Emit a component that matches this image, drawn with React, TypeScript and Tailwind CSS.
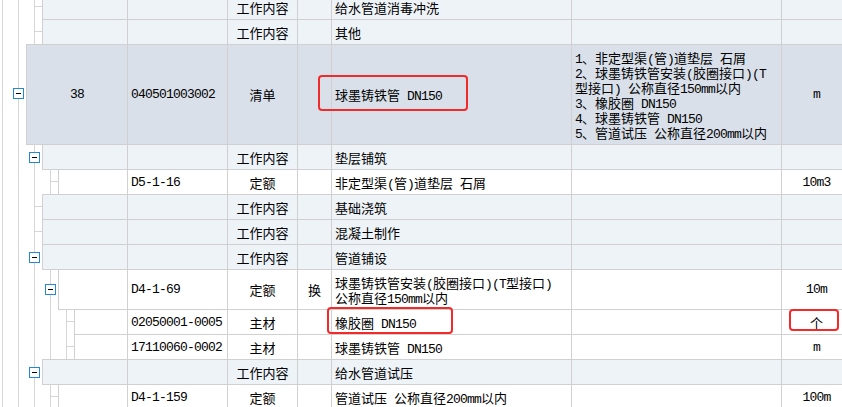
import clsx from 'clsx'

// one row of the 分部分项 tree grid
type Row = {
  start: number // x of the row's left border
  height: number
  h: string
  bg: string
  lines: number[] // tree line x positions
  box?: { x: number; y: number }
  stub?: number
  seq?: string
  code?: string
  cat: string
  mark?: string
  name: string[]
  feat?: string[]
  unit?: string
}

const WORK = 'bg-[#eef3f8]'
const LIST = 'bg-[#d9e0ea]'
const WHITE = 'bg-white'

const rows: Row[] = [
  { start: 42, height: 26, h: 'h-[26px]', bg: WORK, lines: [2, 18, 34], stub: 34, cat: '工作内容', name: ['给水管道消毒冲洗'] },
  { start: 42, height: 26, h: 'h-[26px]', bg: WORK, lines: [2, 18, 34], stub: 34, cat: '工作内容', name: ['其他'] },
  {
    start: 26, height: 101, h: 'h-[101px]', bg: LIST, lines: [2, 18], box: { x: 18, y: 44 },
    seq: '38', code: '040501003002', cat: '清单', name: ['球墨铸铁管 DN150'],
    feat: [
      '1、非定型渠(管)道垫层 石屑',
      '2、球墨铸铁管安装(胶圈接口)(T',
      '型接口) 公称直径150mm以内',
      '3、橡胶圈 DN150',
      '4、球墨铸铁管 DN150',
      '5、管道试压 公称直径200mm以内',
    ],
    unit: 'm',
  },
  { start: 42, height: 26, h: 'h-[26px]', bg: WORK, lines: [2, 18, 34], box: { x: 34, y: 8 }, cat: '工作内容', name: ['垫层铺筑'] },
  { start: 58, height: 26, h: 'h-[26px]', bg: WHITE, lines: [2, 18, 34, 50], stub: 50, code: 'D5-1-16', cat: '定额', name: ['非定型渠(管)道垫层 石屑'], unit: '10m3' },
  { start: 42, height: 26, h: 'h-[26px]', bg: WORK, lines: [2, 18, 34], stub: 34, cat: '工作内容', name: ['基础浇筑'] },
  { start: 42, height: 26, h: 'h-[26px]', bg: WORK, lines: [2, 18, 34], stub: 34, cat: '工作内容', name: ['混凝土制作'] },
  { start: 42, height: 26, h: 'h-[26px]', bg: WORK, lines: [2, 18, 34], box: { x: 34, y: 8 }, cat: '工作内容', name: ['管道铺设'] },
  {
    start: 58, height: 41, h: 'h-[41px]', bg: WHITE, lines: [2, 18, 34, 50], box: { x: 50, y: 15 },
    code: 'D4-1-69', cat: '定额', mark: '换', name: ['球墨铸铁管安装(胶圈接口)(T型接口)', '公称直径150mm以内'], unit: '10m',
  },
  { start: 74, height: 26, h: 'h-[26px]', bg: WHITE, lines: [2, 18, 34, 50, 66], stub: 66, code: '02050001-0005', cat: '主材', name: ['橡胶圈 DN150'], unit: '个' },
  { start: 74, height: 26, h: 'h-[26px]', bg: WHITE, lines: [2, 18, 34, 50, 66], stub: 66, code: '17110060-0002', cat: '主材', name: ['球墨铸铁管 DN150'], unit: 'm' },
  { start: 42, height: 26, h: 'h-[26px]', bg: WORK, lines: [2, 18, 34], box: { x: 34, y: 8 }, cat: '工作内容', name: ['给水管道试压'] },
  { start: 58, height: 26, h: 'h-[26px]', bg: WHITE, lines: [2, 18, 34, 50], stub: 50, code: 'D4-1-159', cat: '定额', name: ['管道试压 公称直径200mm以内'], unit: '100m' },
]

// latin runs get a monospace face squeezed to half-width, like the original's glyphs
const Txt = ({ s }: { s: string }) => (
  <>
    {s.split(/([ -~]+)/).map((part, i) =>
      i % 2 ? (
        <span key={i} className="font-['Liberation_Mono',monospace] text-[13px] leading-[15px] tracking-[-0.8px]">
          {part}
        </span>
      ) : (
        part
      )
    )}
  </>
)

const TreeGutter = ({ row }: { row: Row }) => {
  const mid = Math.floor((row.height - 1) / 2) + 0.5
  return (
    <svg width={row.start} height={row.height} className="block shrink-0">
      {row.lines.map((x) => (
        <line key={x} x1={x + 0.5} y1={0} x2={x + 0.5} y2={row.height} stroke="#d6d6d6" />
      ))}
      {row.stub !== undefined && (
        <line x1={row.stub} y1={mid} x2={row.start} y2={mid} stroke="#d6d6d6" />
      )}
      {row.box && (
        <g>
          <rect x={row.box.x - 4.5} y={row.box.y + 0.5} width={10} height={10} fill="#fff" stroke="#2589d2" />
          <rect x={row.box.x - 2} y={row.box.y + 5} width={5} height={1} fill="#000" />
        </g>
      )}
    </svg>
  )
}

const Cell = ({ className, children }: { className?: string; children?: React.ReactNode }) => (
  <div className={clsx('flex h-full shrink-0 items-center border-y border-r border-[#d0d0d0]', className)}>
    {children}
  </div>
)

const Lines = ({ lines }: { lines: string[] }) => (
  <div>
    {lines.map((l) => (
      <div key={l} className="h-[15px]">
        <Txt s={l} />
      </div>
    ))}
  </div>
)

export default function App() {
  return (
    <div className="relative h-[407px] w-[842px] overflow-hidden bg-white font-['Noto_Sans_CJK_SC',sans-serif] text-[13px] leading-[15px] text-black">
      <div className="mt-[-5px] flex flex-col">
        {rows.map((row, i) => (
          <div key={i} className={clsx('-mt-px flex whitespace-nowrap', row.h)}>
            <div className="flex w-[128px] shrink-0">
              <TreeGutter row={row} />
              <Cell className={clsx('flex-1 justify-center border-l', row.bg)}>
                {row.seq && <Txt s={row.seq} />}
              </Cell>
            </div>
            <Cell className={clsx('w-[100px] pl-[3px]', row.bg)}>{row.code && <Txt s={row.code} />}</Cell>
            <Cell className={clsx('w-[70px] justify-center', row.bg)}>{row.cat}</Cell>
            <Cell className={clsx('w-[34px] justify-center', row.bg)}>{row.mark}</Cell>
            <Cell className={clsx('w-[240px] pl-[3px]', row.bg)}>
              <Lines lines={row.name} />
            </Cell>
            <Cell className={clsx('w-[210px] pl-[3px]', row.bg)}>
              {row.feat && <Lines lines={row.feat} />}
            </Cell>
            <Cell className={clsx('w-[70px] justify-center', row.bg)}>{row.unit && <Txt s={row.unit} />}</Cell>
          </div>
        ))}
      </div>

      {/* red annotation frames */}
      <div className="absolute left-[318px] top-[75px] h-[36px] w-[150px] rounded-[4px] border-2 border-[#f32a2a]" />
      <div className="absolute left-[327px] top-[307px] h-[27px] w-[126px] rounded-[4px] border-2 border-[#f32a2a]" />
      <div className="absolute left-[789px] top-[309px] h-[22px] w-[50px] rounded-[4px] border-2 border-[#f32a2a]" />
    </div>
  )
}
